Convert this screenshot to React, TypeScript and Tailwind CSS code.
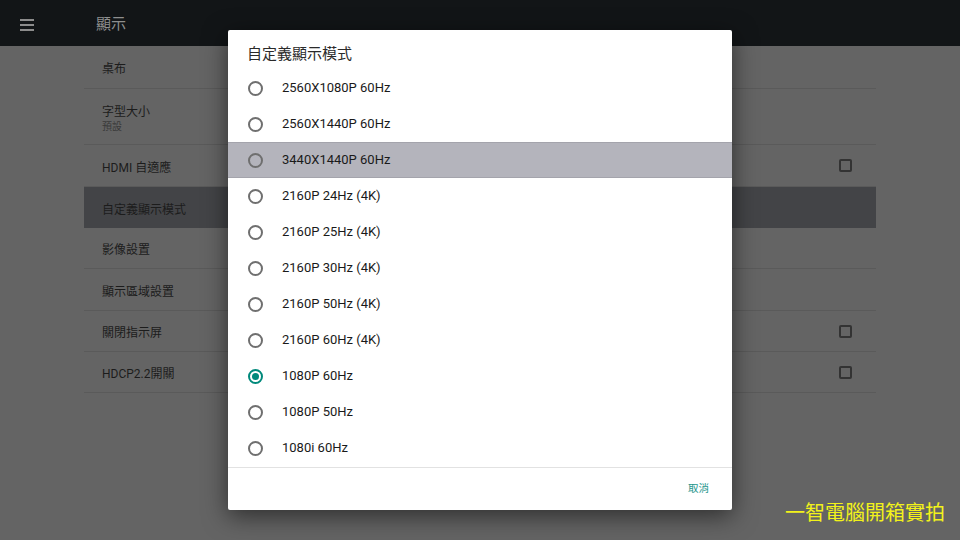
import React from "react";

const cjk = { fontFamily: 'Roboto, "Noto Sans CJK TC", sans-serif' };

type Row = { label: string; sub?: string; check?: boolean; selected?: boolean; h: number };

const rows: Row[] = [
  { label: "桌布", h: 43 },
  { label: "字型大小", sub: "預設", h: 56 },
  { label: "HDMI 自適應", check: true, h: 42 },
  { label: "自定義顯示模式", selected: true, h: 41 },
  { label: "影像設置", h: 41 },
  { label: "顯示區域設置", h: 42 },
  { label: "關閉指示屏", check: true, h: 41 },
  { label: "HDCP2.2開關", check: true, h: 41 },
];

const modes = [
  "2560X1080P 60Hz",
  "2560X1440P 60Hz",
  "3440X1440P 60Hz",
  "2160P 24Hz (4K)",
  "2160P 25Hz (4K)",
  "2160P 30Hz (4K)",
  "2160P 50Hz (4K)",
  "2160P 60Hz (4K)",
  "1080P 60Hz",
  "1080P 50Hz",
  "1080i 60Hz",
];

export default function App() {
  return (
    <div className="relative w-[960px] h-[540px] overflow-hidden bg-[#646464]" style={cjk}>
      <div className="h-[46px] bg-[#121517] flex items-center pt-[3px]">
        <div className="w-[96px] pl-[20px] flex items-center">
          <div className="flex flex-col gap-[3px]">
            <div className="w-[14px] h-[2px] bg-[#8c8c8c]" />
            <div className="w-[14px] h-[2px] bg-[#8c8c8c]" />
            <div className="w-[14px] h-[2px] bg-[#8c8c8c]" />
          </div>
        </div>
        <div className="text-[15px] text-[#8e8e8e]">顯示</div>
      </div>
      <div className="ml-[84px] w-[792px] flex flex-col">
        {rows.map((r) => (
          <div
            key={r.label}
            className={`flex items-center pl-[18px] pr-[24px] ${r.selected ? "bg-[#434447]" : "border-b border-[#5a5a5a]"}`}
            style={{ height: r.h }}
          >
            <div className="flex-1 flex flex-col pt-[4px]">
              <span className="text-[12px] leading-[16px] text-[#1c1c1c]">{r.label}</span>
              {r.sub && <span className="text-[10px] leading-[14px] text-[#3a3a3a]">{r.sub}</span>}
            </div>
            {r.check && <div className="w-[13px] h-[13px] border-2 border-[#333] rounded-[2px]" />}
          </div>
        ))}
      </div>

      <div className="absolute left-[228px] top-[30px] w-[504px] h-[480px] bg-white rounded-[2px] shadow-[0_6px_24px_rgba(0,0,0,0.55)] flex flex-col">
        <div className="h-[40px] pl-[19px] pt-[14px] text-[15px] leading-[20px] text-[#2a2a2a]">自定義顯示模式</div>
        <div className="flex flex-col">
          {modes.map((m, i) => {
            const checked = m === "1080P 60Hz";
            const hi = i === 2;
            return (
              <div key={m} className={`h-[36px] flex items-center pl-[20px] ${hi ? "bg-[#b4b4bc] border-y border-[#a4a4ac]" : ""}`}>
                <div
                  className={`w-[15px] h-[15px] rounded-full border-2 flex items-center justify-center ${checked ? "border-[#00897b]" : "border-[#6f6f6f]"}`}
                >
                  {checked && <div className="w-[7px] h-[7px] rounded-full bg-[#00897b]" />}
                </div>
                <span className="ml-[19px] text-[13px] text-[#1a1a1a]">{m}</span>
              </div>
            );
          })}
        </div>
        <div className="mt-[1px] border-t border-[#e2e2e2] flex-1 flex items-center justify-end pr-[23px]">
          <span className="text-[10.5px] text-[#26968c]">取消</span>
        </div>
      </div>

      <div className="absolute left-[785px] top-[500px] text-[20px] leading-[24px] text-[#f2f21a]" style={{ fontFamily: '"Noto Sans CJK TC", sans-serif' }}>
        一智電腦開箱實拍
      </div>
    </div>
  );
}
